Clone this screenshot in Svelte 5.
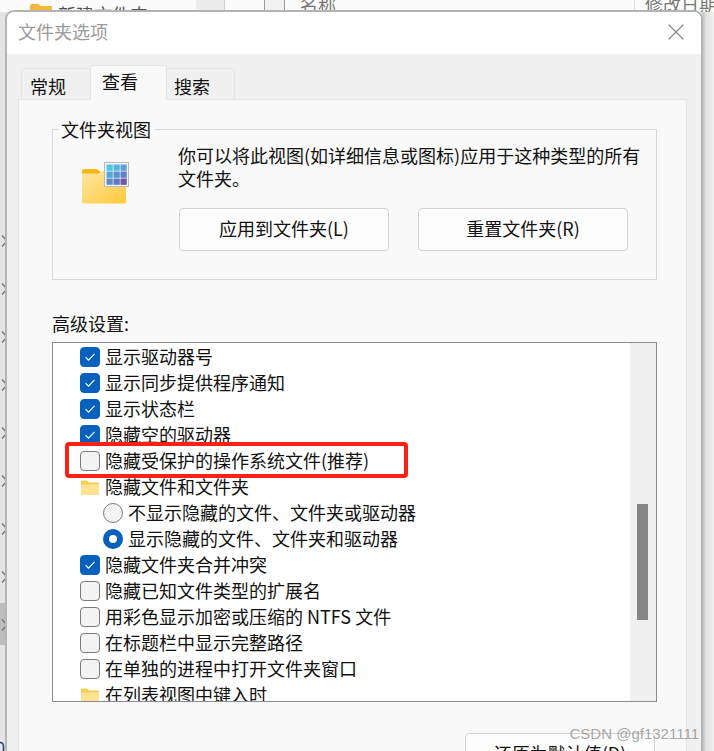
<script>
  const rows = [
    { kind: 'check', on: true, text: '显示驱动器号' },
    { kind: 'check', on: true, text: '显示同步提供程序通知' },
    { kind: 'check', on: true, text: '显示状态栏' },
    { kind: 'check', on: true, text: '隐藏空的驱动器' },
    { kind: 'check', on: false, text: '隐藏受保护的操作系统文件(推荐)' },
    { kind: 'folder', text: '隐藏文件和文件夹' },
    { kind: 'radio', on: false, text: '不显示隐藏的文件、文件夹或驱动器' },
    { kind: 'radio', on: true, text: '显示隐藏的文件、文件夹和驱动器' },
    { kind: 'check', on: true, text: '隐藏文件夹合并冲突' },
    { kind: 'check', on: false, text: '隐藏已知文件类型的扩展名' },
    { kind: 'check', on: false, text: '用彩色显示加密或压缩的 NTFS 文件' },
    { kind: 'check', on: false, text: '在标题栏中显示完整路径' },
    { kind: 'check', on: false, text: '在单独的进程中打开文件夹窗口' },
    { kind: 'folder', text: '在列表视图中键入时' }
  ];
  const chevrons = [0, 1, 2, 3, 4, 5, 6, 7, 8];
  const cells = ['#4fc9e4', '#5bb4dc', '#5d9fd6', '#58a6d2', '#5a93cc', '#5f80c2', '#5a8ec8', '#5f78bb', '#6f55ac'];
</script>

<div class="desktop">
  <div class="backdrop-top">
    <svg class="top-folder" width="22" height="10" viewBox="0 0 22 10"><path d="M0 3a2 2 0 0 1 2-2h6l3 2h10a1 1 0 0 1 1 1v6H0z" fill="#f2b73c" /></svg>
    <span class="top-name">新建文件夹</span>
    <span class="top-shade"></span>
    <span class="top-split"></span>
    <span class="top-col">名称</span>
    <span class="top-date">修改日期</span>
  </div>

  <div class="rail">
    {#each chevrons as c}
      <div class="rail-item" class:hot={c === 8}>
        <svg width="7" height="14" viewBox="0 0 7 14"><path d="M2 1.500l5 5.500-5 5.500" fill="none" stroke="#777" stroke-width="1.400" /></svg>
      </div>
    {/each}
  </div>
  <svg class="arc" width="5" height="10" viewBox="0 0 5 10"><path d="M0 1.500c2.500 0 3.500 1.500 3.500 4V10" fill="none" stroke="#1f3f6e" stroke-width="1.500" /></svg>

  <section class="dialog">
    <header class="titlebar">
      <span>文件夹选项</span>
      <svg width="16" height="16" viewBox="0 0 16 16"><path d="M.5.500l15 15M15.500.500l-15 15" stroke="#8c8c8c" stroke-width="1.300" fill="none" /></svg>
    </header>

    <div class="body">
      <div class="tabs">
        <div class="tab first">常规</div>
        <div class="tab active">查看</div>
        <div class="tab last">搜索</div>
      </div>

      <div class="panel">
        <div class="group">
          <span class="legend">文件夹视图</span>
          <svg class="view-icon" width="47" height="42" viewBox="0 0 47 42">
            <defs>
              <linearGradient id="fold" x1="0" y1="0" x2="1" y2="1">
                <stop offset="0" stop-color="#ffe7a5" />
                <stop offset="1" stop-color="#fdc83a" />
              </linearGradient>
            </defs>
            <path d="M0 9a2 2 0 0 1 2-2h12c1 0 2 .500 3 1.500L21 12H0z" fill="#f8b514" />
            <path d="M0 14a2 2 0 0 1 2-2.500l14 .0 5-2.500h22a1 1 0 0 1 1 1V40a1.500 1.500 0 0 1-1.500 1.500H1.500A1.500 1.500 0 0 1 0 40z" fill="url(#fold)" />
            <rect x="22.500" y=".500" width="24" height="24" fill="#f4f6fa" stroke="#b9b9b9" />
            {#each cells as fill, i}
              <rect x={24.500 + (i % 3) * 7} y={2.500 + Math.floor(i / 3) * 7} width="6.300" height="6.300" {fill} />
            {/each}
          </svg>
          <div class="view-main">
            <p>你可以将此视图(如详细信息或图标)应用于这种类型的所有<br />文件夹。</p>
            <div class="view-buttons">
              <button>应用到文件夹(L)</button>
              <button>重置文件夹(R)</button>
            </div>
          </div>
        </div>

        <div class="adv-label">高级设置:</div>

        <div class="listbox">
          <div class="items">
            {#each rows as row}
              <div class="row" class:indent={row.kind === 'radio'}>
                {#if row.kind === 'check'}
                  <span class="check" class:on={row.on}>
                    {#if row.on}
                      <svg width="12" height="10" viewBox="0 0 12 10"><path d="M1.500 5.200l3 3 6-6.400" fill="none" stroke="#fff" stroke-width="1.100" /></svg>
                    {/if}
                  </span>
                {:else if row.kind === 'radio'}
                  <span class="radio" class:on={row.on}></span>
                {:else}
                  <svg class="mini-folder" width="18" height="15" viewBox="0 0 18 15">
                    <path d="M0 1.500a1 1 0 0 1 1-1h5l2 2h9a1 1 0 0 1 1 1V14a1 1 0 0 1-1 1H1a1 1 0 0 1-1-1z" fill="#f9cc56" />
                    <path d="M0 4.500h18V14a1 1 0 0 1-1 1H1a1 1 0 0 1-1-1z" fill="#fde28f" />
                  </svg>
                {/if}
                <span class="row-text">{row.text}</span>
              </div>
            {/each}
          </div>
          <div class="scrollbar"><div class="thumb"></div></div>
        </div>

        <button class="restore">还原为默认值(D)</button>
      </div>
    </div>
  </section>

  <div class="highlight"></div>
  <div class="watermark">CSDN @gf1321111</div>
</div>

<style>
  :global(body) {
    margin: 0;
  }

  .desktop {
    position: relative;
    width: 714px;
    height: 751px;
    overflow: hidden;
    background: linear-gradient(90deg, #e4e4e4 0, #e4e4e4 702px, #c4c4c4 703px, #e2e2e2 706px, #f1f1f1 714px);
    font-family: "Noto Sans CJK SC", "Noto Sans", sans-serif;
    font-size: 18px;
    color: #111;
  }

  .backdrop-top {
    display: flex;
    height: 12px;
    overflow: hidden;
    background: #fbfbfb;
    color: #555;
    line-height: 26px;
  }

  .top-folder {
    margin: 3px 0 0 30px;
    flex: none;
  }

  .top-name {
    margin: 0 0 0 6px;
    width: 90px;
    flex: none;
    position: relative;
    top: 1px;
  }

  .top-shade {
    margin-left: 48px;
    width: 28px;
    flex: none;
    background: #ececec;
    border-right: 1px solid #cfcfcf;
  }

  .top-split {
    margin-left: 39px;
    width: 19px;
    flex: none;
    background: #f2f2f2;
    border: solid #9a9a9a;
    border-width: 0 1px;
  }

  .top-col {
    margin-left: 15px;
    width: 334px;
    flex: none;
    line-height: 8px;
    color: #777;
  }

  .top-date {
    padding-left: 10px;
    border-left: 1px solid #ddd;
    line-height: 8px;
    color: #777;
    white-space: nowrap;
  }

  .rail {
    position: absolute;
    left: 0;
    top: 217px;
    width: 7px;
    display: flex;
    flex-direction: column;
  }

  .rail-item {
    height: 48px;
    display: flex;
    align-items: center;
  }

  .rail-item.hot {
    background: linear-gradient(transparent 2px, #bcbcbc 2px, #bcbcbc 44px, transparent 44px);
  }

  .rail-item svg {
    display: block;
    flex: none;
  }

  .arc {
    position: absolute;
    left: 0;
    bottom: 0;
  }

  .dialog {
    position: absolute;
    left: 5px;
    top: 10px;
    width: 698px;
    height: 760px;
    box-sizing: border-box;
    border: 2px solid #b4b4b4;
    border-radius: 9px 9px 0 0;
    overflow: hidden;
    background: #f0f0f0;
    display: flex;
    flex-direction: column;
  }

  .titlebar {
    flex: none;
    height: 42px;
    background: #fff;
    display: flex;
    align-items: center;
    justify-content: space-between;
    padding: 0 17px 0 11px;
    color: #9a9a9a;
    line-height: 26px;
  }

  .titlebar span {
    margin-top: -4px;
  }

  .titlebar svg {
    display: block;
    margin-top: -2px;
  }

  .body {
    flex: 1;
    min-height: 0;
    display: flex;
    flex-direction: column;
  }

  .tabs {
    flex: none;
    display: flex;
    align-items: flex-end;
    height: 45px;
    padding-left: 14px;
    position: relative;
    z-index: 1;
  }

  .tab {
    box-sizing: border-box;
    border: 1px solid #e4e4e4;
    border-bottom: 0;
    background: #f0f0f0;
    height: 31px;
    line-height: 34px;
    padding-left: 8px;
    border-radius: 3px 3px 0 0;
  }

  .tab.first {
    width: 69px;
    border-right: 0;
  }

  .tab.last {
    width: 68px;
    border-left: 0;
    padding-left: 7px;
  }

  .tab.active {
    width: 77px;
    height: 35px;
    line-height: 30px;
    padding-left: 11px;
    background: #f9f9f9;
    margin-bottom: -1px;
  }

  .panel {
    flex: 1;
    min-height: 0;
    margin: 0 14px 0 11px;
    box-sizing: border-box;
    background: #f9f9f9;
    border: 1px solid #e4e4e4;
    padding: 29px 0 0 33px;
    display: flex;
    flex-direction: column;
    align-items: flex-start;
    overflow: hidden;
  }

  .group {
    position: relative;
    flex: none;
    box-sizing: border-box;
    width: 605px;
    height: 151px;
    border: 1px solid #d8d8d8;
    padding: 14px 0 0 29px;
    display: flex;
    gap: 49px;
  }

  .legend {
    position: absolute;
    left: 5px;
    top: -14px;
    padding: 0 3px;
    background: #f9f9f9;
    line-height: 26px;
  }

  .view-icon {
    flex: none;
    margin-top: 18px;
  }

  .view-main p {
    margin: 0;
    line-height: 23px;
    white-space: nowrap;
  }

  .view-buttons {
    display: flex;
    gap: 29px;
    margin: 18px 0 0 1px;
  }

  button {
    box-sizing: border-box;
    width: 210px;
    height: 43px;
    border: 1px solid #d2d2d2;
    border-radius: 4px;
    background: #fdfdfd;
    color: #111;
    font: inherit;
    padding: 0 0 3px;
  }

  .adv-label {
    margin-top: 30px;
    line-height: 26px;
    flex: none;
  }

  .listbox {
    flex: none;
    margin-top: 6px;
    box-sizing: border-box;
    width: 605px;
    height: 360px;
    border: 1px solid #8b8b93;
    background: #fff;
    display: flex;
    overflow: hidden;
  }

  .items {
    flex: 1;
    padding-top: 1px;
    min-width: 0;
  }

  .row {
    height: 26px;
    display: flex;
    align-items: center;
    gap: 5px;
    padding-left: 27px;
    line-height: 26px;
    white-space: nowrap;
  }

  .row-text {
    margin-top: -2px;
  }

  .row.indent {
    padding-left: 50px;
  }

  .check,
  .radio {
    flex: none;
    box-sizing: border-box;
    width: 20px;
    height: 20px;
    border: 1px solid #7a7a7a;
    background: #f3f3f3;
    display: flex;
    align-items: center;
    justify-content: center;
  }

  .check {
    border-radius: 4px;
  }

  .check.on {
    background: #0561bd;
    border-color: #0561bd;
  }

  .radio {
    border-radius: 50%;
  }

  .radio.on {
    border: 6px solid #0561bd;
    background: #fff;
  }

  .mini-folder {
    flex: none;
    margin-left: 1px;
    margin-right: 1px;
  }

  .scrollbar {
    flex: none;
    width: 26px;
    background: #f0f0f0;
    padding: 161px 8px 0 7px;
    box-sizing: border-box;
  }

  .thumb {
    height: 116px;
    background: #858585;
  }

  .restore {
    flex: none;
    margin: 31px 0 0 413px;
    width: 190px;
  }

  .highlight {
    position: absolute;
    left: 65px;
    top: 442px;
    width: 343px;
    height: 36px;
    box-sizing: border-box;
    border: 4px solid #fb2014;
    border-radius: 4px;
  }

  .watermark {
    position: absolute;
    right: 15px;
    top: 725px;
    font-family: "Liberation Sans", sans-serif;
    font-size: 15px;
    line-height: 18px;
    color: rgba(110, 110, 110, 0.62);
    white-space: nowrap;
  }
</style>
